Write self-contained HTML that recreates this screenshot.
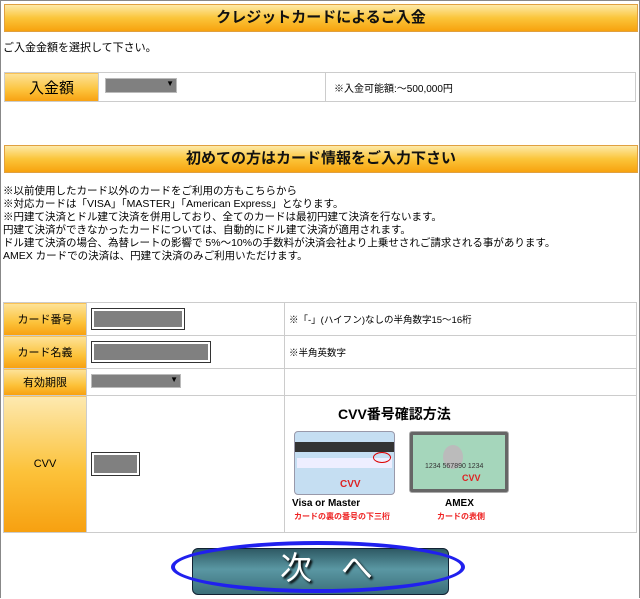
<!DOCTYPE html>
<html><head><meta charset="utf-8"><style>
body{margin:0;width:640px;height:599px;overflow:hidden;background:#fff;font-family:"Liberation Sans","Noto Sans CJK JP",sans-serif;font-size:11px;color:#000;position:relative}
.frame{position:absolute;left:0;top:0;width:638px;height:597px;border:1px solid #888;border-bottom:none}
.hd{position:absolute;left:4px;width:632px;height:26px;background:linear-gradient(#fde9a8,#fbc53a 50%,#f7a20e);border:1px solid #e0a040;text-align:center;font-weight:bold;font-size:15px;line-height:26px;color:#111}
table{position:absolute;border-collapse:collapse}
td{border:1px solid #ccc;padding:0}
.lb{background:linear-gradient(#fde39a,#fcc23a 60%,#f7a010);text-align:center}
.box{display:inline-block;background:#808080;border:1px solid #333;box-shadow:inset 0 0 0 2px #fff;vertical-align:middle}
.t{position:absolute;left:3px;line-height:13px;font-size:10.5px}
</style></head><body>
<div class="frame"></div>
<div class="hd" style="top:4px">クレジットカードによるご入金</div>
<div class="t" style="top:42px;font-size:11px">ご入金金額を選択して下さい。</div>
<table style="left:4px;top:72px;width:632px;height:30px">
<tr><td class="lb" style="width:93px;font-size:15px">入金額</td>
<td style="width:220px;padding-left:6px"><span style="display:inline-block;width:70px;height:13px;background:#808080;border:1px solid #bbb;position:relative"><span style="position:absolute;right:2px;top:0;font-size:8px;color:#000">▼</span></span></td>
<td style="padding-left:8px;font-size:10px">※入金可能額:～500,000円</td></tr></table>
<div class="hd" style="top:145px">初めての方はカード情報をご入力下さい</div>
<div class="t" style="top:185px">※以前使用したカード以外のカードをご利用の方もこちらから<br>※対応カードは「VISA」「MASTER」「American Express」となります。<br>※円建て決済とドル建て決済を併用しており、全てのカードは最初円建て決済を行ないます。<br>円建て決済ができなかったカードについては、自動的にドル建て決済が適用されます。<br>ドル建て決済の場合、為替レートの影響で 5%～10%の手数料が決済会社より上乗せされご請求される事があります。<br>AMEX カードでの決済は、円建て決済のみご利用いただけます。</div>
<table style="left:3px;top:302px;width:634px">
<tr style="height:33px"><td class="lb" style="width:82px">カード番号</td><td style="width:193px;padding-left:4px"><span class="box" style="width:92px;height:20px"></span></td><td style="padding-left:4px;font-size:9.5px">※「-」(ハイフン)なしの半角数字15～16桁</td></tr>
<tr style="height:33px"><td class="lb">カード名義</td><td style="padding-left:4px"><span class="box" style="width:118px;height:20px"></span></td><td style="padding-left:4px;font-size:9.5px">※半角英数字</td></tr>
<tr style="height:27px"><td class="lb">有効期限</td><td style="padding-left:4px"><span style="display:inline-block;width:88px;height:12px;background:#808080;border:1px solid #bbb;position:relative"><span style="position:absolute;right:2px;top:0;font-size:8px">▼</span></span></td><td></td></tr>
<tr style="height:137px"><td class="lb" style="background:linear-gradient(#fde9b0,#fcc23a 55%,#f7a010)">CVV</td><td style="padding-left:4px"><span class="box" style="width:47px;height:22px"></span></td>
<td style="position:relative">
<div style="position:absolute;left:53px;top:8px;font-size:14px;font-weight:bold">CVV番号確認方法</div>
<div style="position:absolute;left:9px;top:35px;width:99px;height:62px;background:#c5def2;border:1px solid #99a;border-radius:4px"><div style="margin-top:10px;height:10px;background:#333"></div><div style="margin:6px 2px;height:10px;background:#eef;font-size:4px"></div><div style="position:absolute;left:78px;top:20px;width:16px;height:9px;border:1px solid #d00;border-radius:50%"></div><div style="position:absolute;left:45px;top:47px;color:#d22;font-weight:bold;font-size:10px">CVV</div></div>
<div style="position:absolute;left:124px;top:35px;width:98px;height:60px;background:#666;border:1px solid #aaa;border-radius:3px"><div style="margin:3px;height:54px;background:#a5d6bb;position:relative"><div style="position:absolute;left:30px;top:10px;width:20px;height:24px;background:#bbb;border-radius:50%"></div><div style="position:absolute;left:12px;top:28px;font-size:7px;color:#333">1234 567890 1234</div><div style="position:absolute;left:49px;top:38px;color:#d22;font-weight:bold;font-size:9px">CVV</div></div></div>
<div style="position:absolute;left:7px;top:102px;font-size:10px;font-weight:bold">Visa or Master</div>
<div style="position:absolute;left:160px;top:102px;font-size:10px;font-weight:bold">AMEX</div>
<div style="position:absolute;left:9px;top:115px;font-size:8px;color:#e22;font-weight:bold">カードの裏の番号の下三桁</div>
<div style="position:absolute;left:152px;top:115px;font-size:8px;color:#e22;font-weight:bold">カードの表側</div>
</td></tr></table>
<div style="position:absolute;left:192px;top:548px;width:255px;height:45px;background:linear-gradient(#2e5a64,#5a97a3 45%,#3b6f79);border-radius:6px;border:1px solid #123"></div>
<div style="position:absolute;left:171px;top:541px;width:294px;height:52px;border:4px solid #2020ee;border-radius:50%;box-sizing:border-box"></div>
<div style="position:absolute;left:280px;top:543px;font-size:32px;color:#fff;text-shadow:2px 2px 2px #000;letter-spacing:10px">次 へ</div>
</body></html>
